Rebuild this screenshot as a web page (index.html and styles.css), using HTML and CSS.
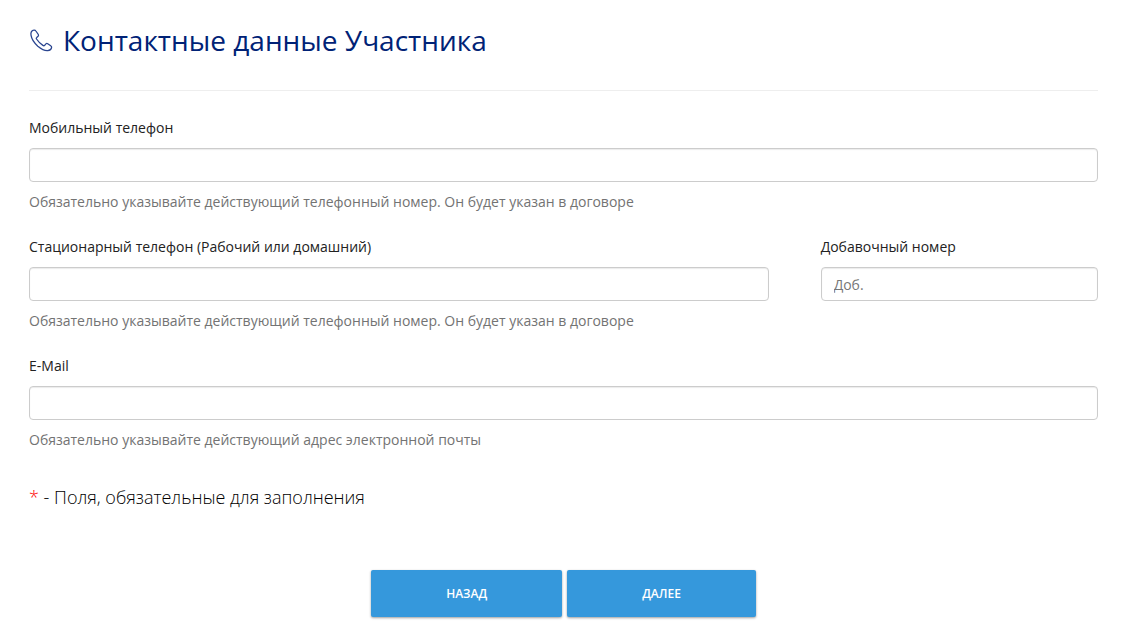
FILE: index.html
```html
<!DOCTYPE html>
<html lang="ru">
<head>
  <meta charset="UTF-8">
  <meta name="viewport" content="width=device-width, initial-scale=1.0">
  <title>Контактные данные Участника</title>
  <link rel="stylesheet" href="styles.css">
</head>
<body>
  <main class="container">
    <h1 class="title">
      <svg class="title-icon" viewBox="0 0 24 24" aria-hidden="true">
        <path d="M4.6 2.2 C2.6 2.8 1.6 4.6 2 7.2 C2.6 11 5.2 15 8.8 18.2 C12.2 21 15.8 22.8 18.6 22.6 C20.8 22.4 22.4 21 22.6 19.4 C22.7 18.6 22.3 18.2 21.7 17.8 L18.7 15.7 C18.1 15.3 17.4 15.4 16.9 15.9 L15.7 17.3 C15.2 17.8 14.5 17.8 13.9 17.4 C11.6 15.8 9.1 13.4 7.5 11 C7.1 10.4 7.2 9.8 7.7 9.4 L9.1 8.2 C9.6 7.7 9.6 7.1 9.3 6.5 L6.9 3 C6.4 2.2 5.5 1.9 4.6 2.2 Z"/>
      </svg>
      Контактные данные Участника
    </h1>

    <form id="contactForm">
      <div class="form-group">
        <label for="mobile">Мобильный телефон</label>
        <input type="tel" id="mobile" name="mobile">
        <p class="help">Обязательно указывайте действующий телефонный номер. Он будет указан в договоре</p>
      </div>

      <div class="form-row">
        <div class="form-group">
          <label for="phone">Стационарный телефон (Рабочий или домашний)</label>
          <input type="tel" id="phone" name="phone">
          <p class="help">Обязательно указывайте действующий телефонный номер. Он будет указан в договоре</p>
        </div>
        <div class="form-group">
          <label for="extension">Добавочный номер</label>
          <input type="text" id="extension" name="extension" placeholder="Доб.">
        </div>
      </div>

      <div class="form-group">
        <label for="email">E-Mail</label>
        <input type="email" id="email" name="email">
        <p class="help">Обязательно указывайте действующий адрес электронной почты</p>
      </div>

      <p class="note"><span class="required">*</span> - Поля, обязательные для заполнения</p>

      <div class="buttons">
        <button type="button">Назад</button>
        <button type="submit">Далее</button>
      </div>
    </form>
  </main>
</body>
</html>
```

FILE: styles.css
```css
/* Basic reset */
* {
  margin: 0;
  padding: 0;
  box-sizing: border-box;
}

body {
  font-family: 'Open Sans', 'Noto Sans', sans-serif;
  font-size: 14px;
  line-height: 20px;
  color: #222;
  background: #fff;
}

.container {
  padding: 20px 42px 6px 29px;
}

/* Page title */
.title {
  display: flex;
  align-items: center;
  gap: 10px;
  padding-bottom: 30px;
  margin-bottom: 27px;
  border-bottom: 1px solid #eee;
  font-size: 28px;
  font-weight: 400;
  line-height: 40px;
  color: #002276;
}

.title-icon {
  flex: none;
  width: 24px;
  height: 24px;
  fill: none;
  stroke: #2a4590;
  stroke-width: 1.3;
}

/* Form styling */
.form-group {
  margin-bottom: 25px;
}

.form-row {
  display: grid;
  grid-template-columns: 8fr 3fr;
  gap: 52px;
}

label {
  display: block;
  margin-bottom: 10px;
}

input {
  display: block;
  width: 100%;
  height: 34px;
  padding: 6px 12px;
  font: inherit;
  color: #555;
  border: 1px solid #ccc;
  border-radius: 4px;
  box-shadow: inset 0 1px 1px rgba(0, 0, 0, 0.08);
}

input::placeholder {
  color: #777;
}

input:focus {
  border-color: #3598dc;
  outline: none;
}

.help {
  margin-top: 10px;
  color: #737373;
}

.note {
  margin-top: 34px;
  font-size: 18px;
  font-weight: 300;
  line-height: 26px;
  color: #000;
}

.required {
  color: #f00;
}

/* Buttons */
.buttons {
  display: flex;
  justify-content: center;
  gap: 5px;
  margin-top: 60px;
}

button {
  height: 47px;
  padding: 0 75px;
  font: inherit;
  font-size: 12px;
  font-weight: 600;
  text-transform: uppercase;
  color: #fff;
  background-color: #3598dc;
  border: none;
  border-radius: 2px;
  box-shadow: 0 1px 3px rgba(0, 0, 0, 0.2), 0 1px 2px rgba(0, 0, 0, 0.2);
  cursor: pointer;
}

button:hover {
  background-color: #217ebd;
}
```
